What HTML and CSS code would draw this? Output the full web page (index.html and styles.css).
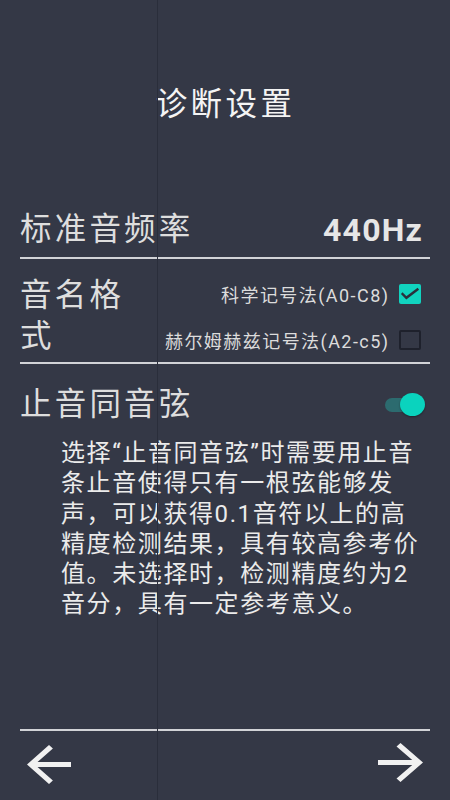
FILE: index.html
```html
<!DOCTYPE html>
<html lang="zh-CN">
<head>
<meta charset="utf-8">
<title>诊断设置</title>
<link rel="stylesheet" href="styles.css">
</head>
<body>
<div class="screen">
  <div class="vline"></div>
  <h1 class="title">诊断设置</h1>

  <div class="row row-freq">
    <span class="label">标准音频率</span>
    <span class="value">440Hz</span>
  </div>

  <div class="row row-format">
    <div class="label label-wrap">音名格式</div>
    <div class="options">
      <div class="option">
        <span class="opt-text">科学记号法(A0-C8)</span>
        <span class="box checked">
          <svg width="22" height="20" viewBox="0 0 22 20"><polyline points="3.6,10 7.4,13.8 18.4,5.4" fill="none" stroke="#2b2f3c" stroke-width="2.4" stroke-linecap="square"/></svg>
        </span>
      </div>
      <div class="option">
        <span class="opt-text">赫尔姆赫兹记号法(A2-c5)</span>
        <span class="box"></span>
      </div>
    </div>
  </div>

  <div class="row row-toggle">
    <span class="label">止音同音弦</span>
    <span class="switch"><span class="track"></span><span class="thumb"></span></span>
  </div>

  <p class="desc">选择“止音同音弦”时需要用止音条止音使得只有一根弦能够发声，可以获得0.1音符以上的高精度检测结果，具有较高参考价值。未选择时，检测精度约为2音分，具有一定参考意义。</p>

  <div class="footer">
    <svg class="arrow" width="44" height="39" viewBox="4 4 16 16" preserveAspectRatio="none"><path d="M20 11H7.83l5.59-5.59L12 4l-8 8 8 8 1.41-1.41L7.83 13H20v-2z" fill="#f1f1f1"/></svg>
    <svg class="arrow arrow-right" width="45" height="39" viewBox="4 4 16 16" preserveAspectRatio="none"><path d="M12 4l-1.41 1.41L16.17 11H4v2h12.17l-5.58 5.59L12 20l8-8z" fill="#f1f1f1"/></svg>
  </div>
</div>
</body>
</html>
```

FILE: styles.css
```css
* { box-sizing: border-box; }

html, body {
  margin: 0;
  padding: 0;
  background: #343846;
}

.screen {
  position: relative;
  width: 450px;
  height: 800px;
  background: #343846;
  display: flex;
  flex-direction: column;
  font-family: Roboto, "Noto Sans CJK SC", sans-serif;
  color: #e2e2e2;
  overflow: hidden;
}

.vline {
  position: absolute;
  left: 157px;
  top: 0;
  bottom: 0;
  width: 1px;
  background: #2a2e3b;
}

.title {
  margin: 85px 0 0;
  height: 40px;
  line-height: 40px;
  font-size: 31.5px;
  font-weight: normal;
  letter-spacing: 3.4px;
  padding-left: 1px;
  text-align: center;
  color: #f4f4f4;
}

.row {
  margin: 0 20px;
  display: flex;
  justify-content: space-between;
}

.label {
  font-size: 31.5px;
  letter-spacing: 3.2px;
  color: #dedede;
}

.row-freq {
  margin-top: 80px;
  height: 54px;
  align-items: center;
  border-bottom: 2px solid #d2d3d7;
  padding-bottom: 2px;
}

.row-freq .label {
  line-height: 40px;
}

.value {
  font-size: 32px;
  font-weight: bold;
  letter-spacing: 1.2px;
  color: #e6e6e6;
  margin-right: 7px;
  line-height: 40px;
}

.row-format {
  align-items: flex-start;
  border-bottom: 2px solid #d2d3d7;
  padding: 16px 9px 5px 0;
}

.label-wrap {
  width: 112px;
  line-height: 41px;
}

.options {
  margin-top: 8px;
  display: flex;
  flex-direction: column;
  align-items: flex-end;
  gap: 24px;
}

.option {
  display: flex;
  align-items: center;
  height: 22px;
}

.opt-text {
  font-size: 18px;
  letter-spacing: 1.45px;
  color: #dcdcdc;
  margin-right: 9.5px;
}

.box {
  width: 22px;
  height: 20px;
  border: 2px solid #1e212c;
  border-radius: 2px;
  display: flex;
}

.box.checked {
  background: #11d3bf;
  border: none;
}

.row-toggle {
  align-items: center;
  padding-top: 20px;
  height: 61px;
}

.row-toggle .label {
  line-height: 40px;
}

.switch {
  position: relative;
  width: 40px;
  height: 24px;
  margin-right: 5px;
}

.track {
  position: absolute;
  left: 0;
  top: 5px;
  width: 34px;
  height: 14px;
  border-radius: 7px;
  background: #2c6b6f;
}

.thumb {
  position: absolute;
  right: 0;
  top: 0;
  width: 25px;
  height: 23px;
  border-radius: 50%;
  background: #0ad3be;
  box-shadow: 0 1px 2px rgba(0, 0, 0, 0.35);
}

.desc {
  margin: 13px 0 0 61px;
  width: 364px;
  font-size: 24px;
  letter-spacing: 1.6px;
  line-height: 30.3px;
  color: #ebebeb;
}

.footer {
  margin: auto 20px 0;
  height: 71px;
  border-top: 2px solid #d2d3d7;
  display: flex;
  justify-content: space-between;
  align-items: center;
  padding: 0 7px 2px;
}

.arrow {
  display: block;
}

.arrow-right {
  margin-top: -4px;
}
```
